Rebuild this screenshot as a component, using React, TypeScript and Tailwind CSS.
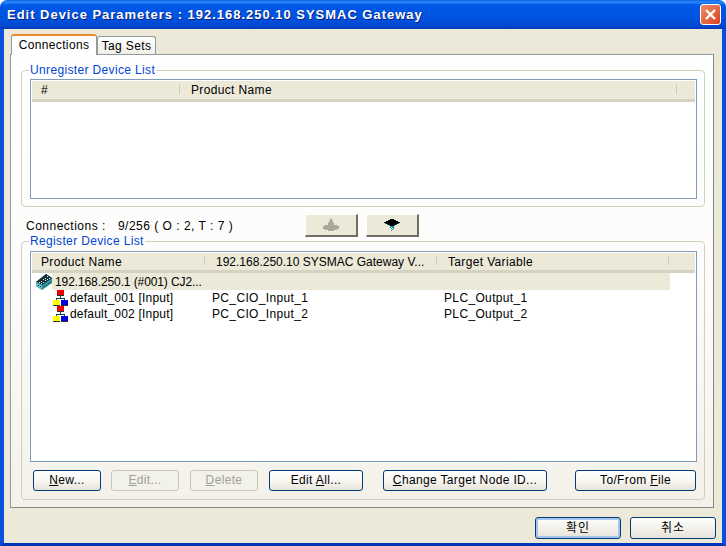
import { ReactNode } from "react";

const DeviceIcon = () => (
  <svg width="16" height="16" viewBox="0 0 16 16" className="shrink-0">
    <polygon points="0,8 10,0 16,4 16,9 6,16 0,12" fill="#2f8f98" />
    <polygon points="0,8 10,0 16,4 6,11" fill="#16303a" />
    <polygon points="0,8 6,11 6,16 0,12" fill="#5fb8bc" />
    <path d="M3 8h1v1H3zM5 7h1v1H5zM7 5h1v1H7zM9 4h1v1H9zM11 2h1v1h-1zM5 9h1v1H5zM7 8h1v1H7zM9 6h1v1H9zM11 5h1v1h-1zM13 4h1v1h-1z" fill="#e8f0f0" shapeRendering="crispEdges" />
    <path d="M8 12h1v1H8zM10 11h1v1h-1zM12 9h1v1h-1zM14 8h1v1h-1zM2 11h1v1H2zM4 12h1v1H4z" fill="#0c4a50" shapeRendering="crispEdges" />
  </svg>
);

const TreeIcon = () => (
  <svg width="16" height="16" viewBox="0 0 16 16" shapeRendering="crispEdges" className="shrink-0">
    <path d="M7 6h1v2h4v2h-1V9H4v1H3V8h4z" fill="#0c4a4a" />
    <rect x="4" y="0" width="7" height="5" fill="#f00000" />
    <path d="M4 5h7v1H4z" fill="#303030" />
    <rect x="0" y="10" width="7" height="5" fill="#ffff00" />
    <path d="M0 15h7v1H0z" fill="#303030" />
    <rect x="8" y="10" width="7" height="5" fill="#0000e0" />
    <path d="M8 15h7v1H8z" fill="#303030" />
  </svg>
);

const UpIcon = () => (
  <svg width="16" height="14" viewBox="0 0 16 14" shapeRendering="crispEdges">
    <path d="M7 1h2v2h1v2h1v2h3v1h2v3h-2v1h-3v1H5v-1H2v-1H0V8h2V7h3V5h1V3h1z" fill="#aca899" />
    <path d="M7 0h1v1H7zM9 1h1v1H9zM5 4h1v1H5zM10 4h1v1h-1zM1 7h1v1H1zM14 7h1v1h-1z" fill="#d4d0c0" />
    <path d="M4 12h1v1H4zM8 13h1v1H8zM11 12h1v1h-1z" fill="#ffffff" />
  </svg>
);

const DownIcon = () => (
  <svg width="16" height="13" viewBox="0 0 16 13" shapeRendering="crispEdges">
    <path d="M6 0h4v1h2v1h2v1h2v1h-2v1h-2v1h-2v1H6V6H4V5H2V4H0V3h2V2h2V1h2z" fill="#000000" />
    <path d="M1 4h1v1h2v1h2v1h4V6h2V5h2V4h1v1h-2v1h-2v1h-1v1H6V7H5V6H3V5H1z" fill="#1a9aa0" />
    <path d="M6 8h1v1H6zM8 8h1v1H8zM7 9h1v1H7zM9 9h1v1H9zM8 10h1v1H8zM7 11h1v1H7zM9 8h1v1H9z" fill="#159098" />
  </svg>
);

const Btn = ({ w, ml, disabled, children }: { w: string; ml?: string; disabled?: boolean; children: ReactNode }) => (
  <button
    className={`h-[21px] ${w} ${ml ?? ""} shrink-0 rounded-[3px] border text-[12px] leading-[19px] ${
      disabled
        ? "border-[#c9c7ba] bg-[#f2f1ea] text-[#a1a192]"
        : "border-[#003c74] bg-gradient-to-b from-white via-[#f8f7f3] to-[#e6e3d8] text-black"
    }`}
  >
    {children}
  </button>
);

const HeaderCell = ({ w, pl, children }: { w: string; pl?: string; children?: ReactNode }) => (
  <div className={`${w} ${pl ?? "pl-[10px]"} h-full flex items-center shrink-0 relative whitespace-nowrap`}>
    {children}
    <span className="absolute right-[1px] top-[3px] bottom-[5px] w-[1px] bg-[#cfccbb]" />
  </div>
);

const Row = ({ name, input, output }: { name: string; input: string; output: string }) => (
  <div className="flex h-[16px] items-center pl-[22px] text-[12px]">
    <TreeIcon />
    <span className="w-[143px] shrink-0 pl-[1px] tracking-[0.2px]">{name}</span>
    <span className="w-[232px] shrink-0">{input}</span>
    <span>{output}</span>
  </div>
);

export default function App() {
  return (
    <div className="w-[726px] h-[546px] flex flex-col overflow-hidden bg-[#ece9d8] rounded-t-[7px] font-['Liberation_Sans','Noto_Sans_CJK_KR',sans-serif] text-[12px] tracking-[0.35px] text-black">
      {/* title bar */}
      <div className="h-[29px] shrink-0 flex items-center justify-between pl-[7px] pr-[5px] bg-[linear-gradient(to_bottom,#0a60e8_0,#2a8cf8_2px,#0058e6_5px,#0053e1_60%,#0348d0_90%,#0339b8_100%)]">
        <span className="text-white font-bold text-[13px] tracking-[0.98px] [text-shadow:1px_1px_0_#0f1f7a]">
          Edit Device Parameters : 192.168.250.10 SYSMAC Gateway
        </span>
        <div className="w-[21px] h-[21px] rounded-[3px] border border-white bg-gradient-to-br from-[#ec8c68] to-[#dc3f18] flex items-center justify-center">
          <svg width="13" height="13" viewBox="0 0 13 13">
            <path d="M2 2 L11 11 M11 2 L2 11" stroke="white" strokeWidth="2.4" />
          </svg>
        </div>
      </div>

      {/* client area */}
      <div className="flex-1 flex flex-col border-x-[4px] border-b-[3px] border-x-[#0a50dc] border-b-[#0336b4] bg-[#ece9d8]">
        {/* tabs */}
        <div className="flex items-end h-[25px] pl-[7px] shrink-0 relative z-10">
          <div className="w-[86px] h-[21px] mb-[-1px] pb-[2px] bg-white border-x border-[#919b9c] rounded-t-[3px] border-t-[2px] border-t-[#e68b2c] flex items-center justify-center">
            Connections
          </div>
          <div className="w-[59px] h-[18px] bg-gradient-to-b from-white to-[#f0efe6] border-x border-t border-[#919b9c] rounded-t-[3px] flex items-center justify-center">
            Tag Sets
          </div>
        </div>

        {/* tab page */}
        <div className="ml-[6px] w-[704px] h-[454px] shrink-0 border border-[#919b9c] border-r-[#7f8a8b] border-b-[#7f8a8b] bg-gradient-to-b from-white via-[#fdfcfb] to-[#f3f1e9] pl-[10px] pr-[8px] flex flex-col">
          <fieldset className="mt-[8px] h-[144px] shrink-0 border border-[#d0d0bf] rounded-[4px] pl-[8px] pr-[7px]">
            <legend className="ml-[-1px] px-[1px] text-[#0046d5] leading-[14px]">Unregister Device List</legend>
            <div className="mt-[2px] h-[120px] border border-[#7f9db9] bg-white">
              <div className="h-[21px] flex bg-[#ece9d8] border-b-[3px] border-[#d6d2c2] mx-[1px] mt-[1px]">
                <HeaderCell w="w-[149px]" pl="pl-[9px]">#</HeaderCell>
                <HeaderCell w="w-[497px]">Product Name</HeaderCell>
              </div>
            </div>
          </fieldset>

          {/* connections counter and move buttons */}
          <div className="h-[23px] mt-[7px] flex items-center shrink-0 relative z-10">
            <span className="w-[284px] pl-[5px] shrink-0 tracking-[0.5px]">
              Connections :<span className="ml-[12px]">9/256 ( O : 2, T : 7 )</span>
            </span>
            <div className="w-[53px] h-[23px] shrink-0 bg-[#ece9d8] border-t border-l border-white border-r-2 border-b-2 border-r-[#716f64] border-b-[#716f64] flex items-center justify-center">
              <UpIcon />
            </div>
            <div className="ml-[8px] w-[53px] h-[23px] shrink-0 bg-[#ece9d8] border-t border-l border-white border-r-2 border-b-2 border-r-[#716f64] border-b-[#716f64] flex items-center justify-center">
              <DownIcon />
            </div>
          </div>

          <fieldset className="mt-[-3px] h-[266px] shrink-0 border border-[#d0d0bf] rounded-[4px] pl-[8px] pr-[7px]">
            <legend className="ml-[-1px] px-[1px] text-[#0046d5] leading-[14px]">Register Device List</legend>
            <div className="mt-[3px] h-[211px] border border-[#7f9db9] bg-white">
              <div className="h-[20px] flex bg-[#ece9d8] border-b-[3px] border-[#d6d2c2] mx-[1px] mt-[1px]">
                <HeaderCell w="w-[174px]" pl="pl-[9px]">Product Name</HeaderCell>
                <HeaderCell w="w-[232px]"><span className="tracking-[0px]">192.168.250.10 SYSMAC Gateway V...</span></HeaderCell>
                <HeaderCell w="w-[232px]">Target Variable</HeaderCell>
              </div>
              <div className="flex h-[17px] items-center pl-[5px]">
                <DeviceIcon />
                <div className="w-[618px] h-full bg-[#ece9d8] flex items-center pl-[3px] tracking-[-0.1px]">
                  192.168.250.1 (#001) CJ2...
                </div>
              </div>
              <Row name="default_001 [Input]" input="PC_CIO_Input_1" output="PLC_Output_1" />
              <Row name="default_002 [Input]" input="PC_CIO_Input_2" output="PLC_Output_2" />
            </div>

            <div className="mt-[8px] flex pl-[3px]">
              <Btn w="w-[68px]"><u>N</u>ew...</Btn>
              <Btn w="w-[68px]" ml="ml-[10px]" disabled><u>E</u>dit...</Btn>
              <Btn w="w-[68px]" ml="ml-[11px]" disabled><u>D</u>elete</Btn>
              <Btn w="w-[94px]" ml="ml-[11px]">Edit <u>A</u>ll...</Btn>
              <Btn w="w-[164px]" ml="ml-[20px]"><u>C</u>hange Target Node ID...</Btn>
              <Btn w="w-[121px]" ml="ml-[28px]">To/From <u>F</u>ile</Btn>
            </div>
          </fieldset>
        </div>

        {/* dialog buttons */}
        <div className="flex justify-end gap-[9px] pr-[6px] mt-[9px]">
          <button className="w-[86px] h-[22px] rounded-[3px] border border-[#003c74] bg-gradient-to-b from-white to-[#e6e3d8] shadow-[inset_0_0_0_2px_#a6c4ec] text-[12px] tracking-[1px]">확인</button>
          <button className="w-[86px] h-[22px] rounded-[3px] border border-[#003c74] bg-gradient-to-b from-white to-[#e6e3d8] text-[12px] tracking-[1px]">취소</button>
        </div>
      </div>
    </div>
  );
}
